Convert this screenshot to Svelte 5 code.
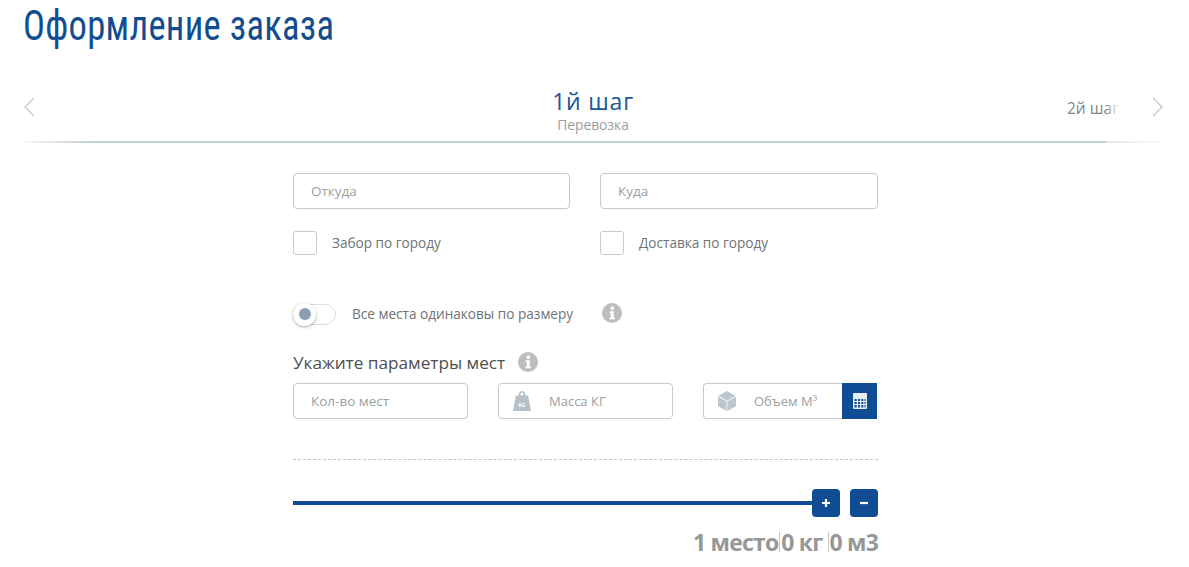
<script lang="ts">
	const fieldsTop = [
		{ placeholder: 'Откуда', check: 'Забор по городу' },
		{ placeholder: 'Куда', check: 'Доставка по городу' }
	];
</script>

{#snippet info()}
	<svg class="info" viewBox="0 0 20 20" aria-hidden="true">
		<circle cx="10" cy="10" r="10" fill="#bdbdbd" />
		<circle cx="10.4" cy="5.2" r="1.9" fill="#fff" />
		<path d="M7.6 8.3h4.2v6.4h1.2v1.6H7.4v-1.6h1.3v-4.8H7.6z" fill="#fff" />
	</svg>
{/snippet}

<div class="page">
	<h1><span>Оформление заказа</span></h1>

	<div class="stepper">
		<svg class="chevron" viewBox="0 0 12 20" aria-hidden="true"><path d="M11 1 2 10l9 9" /></svg>
		<div class="current">
			<div class="step-title">1й шаг</div>
			<div class="step-sub">Перевозка</div>
		</div>
		<div class="next-step">2й шаг<span class="fade"></span></div>
		<svg class="chevron" viewBox="0 0 12 20" aria-hidden="true"><path d="m1 1 9 9-9 9" /></svg>
	</div>
	<div class="rule"></div>

	<form class="form">
		<div class="route">
			{#each fieldsTop as f}
				<div class="route-col">
					<div class="input"><span>{f.placeholder}</span></div>
					<label class="check"><span class="box"></span><span class="check-text">{f.check}</span></label>
				</div>
			{/each}
		</div>

		<div class="same">
			<span class="toggle"><span class="knob"><span class="knob-dot"></span></span></span>
			<span class="same-label">Все места одинаковы по размеру</span>
			{@render info()}
		</div>

		<div class="heading">Укажите параметры мест {@render info()}</div>

		<div class="params">
			<div class="input"><span>Кол-во мест</span></div>
			<div class="input with-icon">
				<svg class="field-icon" viewBox="0 0 18 20" aria-hidden="true">
					<path fill-rule="evenodd" d="M9 0a3.2 3.2 0 0 1 2.9 4.6h2.300c.6 0 1 .3 1.100.8L18 20H0L2.700 5.400c.1-.5.5-.8 1.100-.8h2.300A3.200 3.200 0 0 1 9 0zm0 1.800a1.400 1.400 0 1 0 0 2.800 1.400 1.400 0 0 0 0-2.800z" fill="#b5c0cb" />
					<text x="9" y="15.500" text-anchor="middle" class="kg">KG</text>
				</svg>
				<span>Масса КГ</span>
			</div>
			<div class="volume">
				<div class="input with-icon joined">
					<svg class="field-icon" viewBox="0 0 18 20" aria-hidden="true">
						<path d="M9 0l8.500 4.800L9 9.700.5 4.800z" fill="#bcc6d0" />
						<path d="M0 5.500l8.600 5V20L0 15.200z" fill="#bcc6d0" />
						<path d="M18 5.500l-8.600 5V20l8.600-4.800z" fill="#bcc6d0" />
					</svg>
					<span>Объем М³</span>
				</div>
				<button type="button" class="calc" aria-label="Калькулятор">
					<svg viewBox="0 0 14 16" aria-hidden="true">
						<path fill-rule="evenodd" d="M1 0h12a1 1 0 0 1 1 1v14a1 1 0 0 1-1 1H1a1 1 0 0 1-1-1V1a1 1 0 0 1 1-1zM1.500 6v2h2.200V6zm3.500 0v2h2V6zm3.300 0v2h2V6zm3.200 0v2h1.100V6zM1.500 9v2h2.200V9zM5 9v2h2V9zm3.300 0v2h2V9zm3.200 0v2h1.100V9zm-10 3v2.500h2.200V12zM5 12v2.500h2v-2.500zm3.300 0v2.500h2v-2.500zm3.200 0v2.500h1.100v-2.500z" fill="#e6edf5" />
					</svg>
				</button>
			</div>
		</div>

		<div class="dashed"></div>

		<div class="slider">
			<div class="track"></div>
			<button type="button" class="round plus" aria-label="Добавить"><svg viewBox="0 0 10 10" aria-hidden="true"><path d="M5 1v8M1 5h8" /></svg></button>
			<button type="button" class="round" aria-label="Убрать"><svg viewBox="0 0 10 10" aria-hidden="true"><path d="M1 5h8" /></svg></button>
		</div>

		<div class="summary">
			<span>1 место</span><i></i><span>0 кг</span><i class="wide"></i><span>0 м3</span>
		</div>
	</form>
</div>

<style>
	:global(body) {
		margin: 0;
		background: #fff;
	}

	.page {
		height: 567px;
		overflow: hidden;
		padding: 0 26px 0 23px;
		box-sizing: border-box;
		font-family: "Open Sans", "Noto Sans", sans-serif;
	}

	h1 {
		margin: 0;
		height: 52px;
		font-family: "Liberation Sans Narrow", "Roboto Condensed", "Noto Sans", sans-serif;
		font-size: 42px;
		font-weight: 400;
		line-height: 52px;
		letter-spacing: 0.35px;
		color: #124e8f;
		white-space: nowrap;
	}

	h1 span {
		display: inline-block;
		transform: scaleX(0.87);
		transform-origin: left center;
	}

	.stepper {
		display: flex;
		align-items: center;
		margin-top: 36px;
		height: 53px;
	}

	.chevron {
		width: 12px;
		height: 20px;
		flex-shrink: 0;
		margin-bottom: 16px;
		fill: none;
		stroke: #c4c8cc;
		stroke-width: 1.3;
	}

	.current {
		margin-left: 518px;
		width: 80px;
		margin-bottom: 9px;
		text-align: center;
		white-space: nowrap;
	}

	.step-title {
		font-size: 23px;
		line-height: 30px;
		letter-spacing: 0.8px;
		color: #1d5693;
		display: flex;
		justify-content: center;
	}

	.step-sub {
		font-size: 13.800px;
		line-height: 18px;
		color: #9a9ea2;
		display: flex;
		justify-content: center;
	}

	.next-step {
		position: relative;
		margin-left: 434px;
		margin-bottom: 14px;
		width: 50px;
		font-size: 15.500px;
		white-space: nowrap;
		color: #858585;
	}

	.fade {
		position: absolute;
		top: 0;
		right: -3px;
		bottom: 0;
		width: 14px;
		background: linear-gradient(to right, rgba(255, 255, 255, 0), #fff);
	}

	.next-step + .chevron {
		margin-left: 35px;
	}

	.rule {
		height: 2px;
		background: linear-gradient(to right, #f6f7f7 0, #c3d0d4 6%, #c3d0d4 95%, #e6e9e9 95%, #fafafa 100%);
	}

	.form {
		width: 585px;
		margin-left: 270px;
		padding-top: 30px;
	}

	.route {
		display: grid;
		grid-template-columns: 277px 278px;
		gap: 30px;
	}

	.input {
		display: flex;
		align-items: center;
		box-sizing: border-box;
		height: 36px;
		padding: 0 0 1px 17px;
		border: 1px solid #c7c9cb;
		border-radius: 4px;
		background: #fff;
		font-size: 13.500px;
		color: #9c9fa2;
	}

	.check {
		display: flex;
		align-items: center;
		gap: 15px;
		margin-top: 22px;
		font-size: 13.600px;
		color: #6f7275;
	}

	.check-text {
		padding-bottom: 2px;
	}

	.box {
		width: 24px;
		height: 24px;
		box-sizing: border-box;
		border: 1px solid #c7c9cb;
		border-radius: 3px;
	}

	.same {
		display: flex;
		align-items: center;
		margin-top: 46px;
		height: 24px;
	}

	.toggle {
		position: relative;
		width: 43px;
		height: 21px;
		margin-top: 2px;
		box-sizing: border-box;
		border: 1px solid #d9dbdd;
		border-radius: 11px;
	}

	.knob {
		position: absolute;
		left: -1px;
		top: -2px;
		display: flex;
		align-items: center;
		justify-content: center;
		width: 23px;
		height: 23px;
		border-radius: 50%;
		background: #fff;
		box-shadow: 0 1px 3px rgba(0, 0, 0, 0.35);
	}

	.knob-dot {
		width: 12px;
		height: 12px;
		border-radius: 50%;
		background: #8b9cb3;
	}

	.same-label {
		margin-left: 16px;
		font-size: 13.600px;
		color: #6f7275;
	}

	.info {
		width: 20px;
		height: 20px;
		flex-shrink: 0;
	}

	.same .info {
		margin-left: 29px;
	}

	.heading {
		display: flex;
		align-items: center;
		gap: 13px;
		margin-top: 23px;
		height: 28px;
		font-size: 17.200px;
		color: #4c4f52;
	}

	.params {
		display: flex;
		gap: 30px;
		margin-top: 7px;
	}

	.params > .input {
		width: 175px;
	}

	.with-icon {
		padding-left: 14px;
		font-size: 13px;
	}

	.field-icon {
		width: 18px;
		height: 20px;
		flex-shrink: 0;
		margin: 1px 18px 0 0;
	}

	.kg {
		font-family: "Open Sans", sans-serif;
		font-size: 5px;
		font-weight: 700;
		fill: #fff;
	}

	.volume {
		display: flex;
		width: 174px;
	}

	.joined {
		flex: 1;
		border-right: 0;
		border-radius: 4px 0 0 4px;
	}

	.calc {
		display: flex;
		align-items: center;
		justify-content: center;
		width: 35px;
		height: 36px;
		padding: 0;
		border: 0;
		background: #0f4c93;
	}

	.calc svg {
		width: 14px;
		height: 16px;
	}

	.dashed {
		margin-top: 40px;
		border-top: 1px dashed #c2c4c6;
	}

	.slider {
		display: flex;
		align-items: center;
		margin-top: 29px;
	}

	.track {
		flex: 1;
		height: 4px;
		background: #0f4c93;
	}

	.round {
		display: flex;
		align-items: center;
		justify-content: center;
		width: 28px;
		height: 28px;
		padding: 0;
		border: 0;
		border-radius: 4px;
		background: #0f4c93;
	}

	.plus {
		margin-right: 10px;
	}

	.round svg {
		width: 10px;
		height: 10px;
		fill: none;
		stroke: #fff;
		stroke-width: 2.200;
	}

	.summary {
		display: flex;
		justify-content: flex-end;
		align-items: center;
		margin-top: 10px;
		font-size: 23px;
		font-weight: 700;
		letter-spacing: -0.8px;
		line-height: 30px;
		color: #979797;
	}

	.summary i {
		width: 1px;
		height: 20px;
		margin: 0 1px;
		background: #c9c9c9;
	}

	.summary i.wide {
		margin-left: 5px;
	}
</style>
